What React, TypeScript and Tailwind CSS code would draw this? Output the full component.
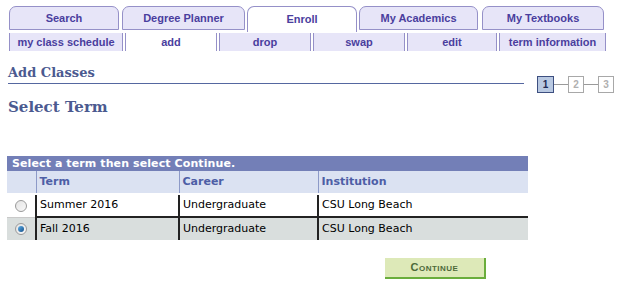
import React from "react";

const tabs = [
  { label: "Search", w: "w-[110px]", mr: "mr-[3px]" },
  { label: "Degree Planner", w: "w-[123px]", mr: "mr-[2px]" },
  { label: "Enroll", w: "w-[110px]", mr: "mr-[2px]", active: true },
  { label: "My Academics", w: "w-[119px]", mr: "mr-[4px]" },
  { label: "My Textbooks", w: "w-[122px]", mr: "" },
];

const subtabs = [
  { label: "my class schedule", w: "w-[114px]" },
  { label: "add", w: "w-[92px]", active: true },
  { label: "drop", w: "w-[92px]" },
  { label: "swap", w: "w-[92px]" },
  { label: "edit", w: "w-[90px]" },
  { label: "term information", w: "w-[107px]" },
];

const rows = [
  { term: "Summer 2016", career: "Undergraduate", inst: "CSU Long Beach", checked: false },
  { term: "Fall 2016", career: "Undergraduate", inst: "CSU Long Beach", checked: true },
];

function Radio({ checked }: { checked: boolean }) {
  return (
    <span className="mx-auto flex h-[12px] w-[12px] items-center justify-center rounded-full border border-[#9a9a9a] bg-gradient-to-br from-[#e4e4e4] to-[#f8f8f8]">
      {checked && <span className="h-[6px] w-[6px] rounded-full bg-gradient-to-br from-[#5fb0e8] to-[#14508a]" />}
    </span>
  );
}

function Step({ n, active }: { n: number; active?: boolean }) {
  return (
    <span
      className={
        active
          ? "flex h-[17px] w-[17px] items-center justify-center border border-[#3d4f80] bg-[#b9c9e2] text-[10px] font-bold leading-none text-[#1e2a55]"
          : "flex h-[17px] w-[16px] items-center justify-center border border-[#a8a8a8] bg-white text-[10px] font-bold leading-none text-[#b0b0b0]"
      }
    >
      {n}
    </span>
  );
}

export default function App() {
  return (
    <div className="h-[283px] w-[620px] overflow-hidden bg-white font-['Liberation_Sans',Arial,sans-serif]">
      {/* top tabs */}
      <div className="flex pl-[9px] pt-[6px]">
        {tabs.map((t) => (
          <div
            key={t.label}
            className={`${t.w} ${t.mr} flex items-center justify-center rounded-t-[7px] border border-[#9590c8] text-[11px] font-bold text-[#4a3e9e] ${
              t.active ? "h-[26px] border-b-0 bg-white" : "h-[24px] bg-[#e7e5f8]"
            }`}
          >
            {t.label}
          </div>
        ))}
      </div>
      {/* sub tabs */}
      <div className="mt-[1px] flex gap-[2px] pl-[9px]">
        {subtabs.map((s) => (
          <div
            key={s.label}
            className={`${s.w} flex h-[18px] items-center justify-center border-x border-[#9590c8] text-[11px] font-bold text-[#4a3e9e] ${
              s.active ? "bg-white" : "bg-[#e7e5f8]"
            }`}
          >
            {s.label}
          </div>
        ))}
      </div>

      {/* page title */}
      <div className="mt-[13px] flex items-start">
        <div className="ml-[8px] w-[516px] border-b border-[#5567a0] pb-[2px] font-['DejaVu_Serif',serif] text-[13px] font-bold leading-[17px] text-[#4b5a90]">
          Add Classes
        </div>
        <div className="ml-[13px] mt-[12px] flex items-center">
          <Step n={1} active />
          <span className="h-px w-[14px] bg-[#9a9a9a]" />
          <Step n={2} />
          <span className="h-px w-[14px] bg-[#9a9a9a]" />
          <Step n={3} />
        </div>
      </div>
      <div className="ml-[8px] mt-[4px] font-['DejaVu_Serif',serif] text-[15px] font-bold leading-[20px] text-[#4b5a90]">
        Select Term
      </div>

      {/* table */}
      <table className="ml-[7px] mt-[39px] w-[521px] border-collapse font-['DejaVu_Sans',Verdana,sans-serif] text-[11px]">
        <thead>
          <tr>
            <th colSpan={4} className="h-[15px] bg-[#737fb7] pl-[5px] text-left text-[11px] font-bold leading-[15px] tracking-[0.1px] text-white">
              Select a term then select Continue.
            </th>
          </tr>
          <tr className="bg-[#dbe2f2] text-left font-bold text-[#4d5ea6]">
            <th className="h-[23px] w-[29px] border-b-2 border-white" />
            <th className="w-[143px] border-b-2 border-l border-white border-l-[#8d9ac8] pl-[3px] font-bold">Term</th>
            <th className="w-[139px] border-b-2 border-l border-white border-l-[#8d9ac8] pl-[3px] font-bold">Career</th>
            <th className="border-b-2 border-l border-white border-l-[#8d9ac8] pl-[3px] font-bold">Institution</th>
          </tr>
        </thead>
        <tbody className="text-black">
          {rows.map((r) => (
            <tr key={r.term} className={r.checked ? "bg-[#d9dedd]" : "bg-white"}>
              <td className="h-[23px] border-t border-[#c9c9c9]">
                <Radio checked={r.checked} />
              </td>
              <td className="border-l-2 border-t-2 border-[#222] pl-[3px]">{r.term}</td>
              <td className="border-l-2 border-t-2 border-[#222] pl-[3px]">{r.career}</td>
              <td className="border-l-2 border-t-2 border-[#222] pl-[3px]">{r.inst}</td>
            </tr>
          ))}
        </tbody>
      </table>

      {/* continue */}
      <div className="ml-[385px] mt-[18px] flex h-[21px] w-[101px] items-center justify-center border-b-2 border-r-2 border-[#6aad3c] bg-[#dde9b8] text-[11px] font-bold tracking-[0.5px] text-[#4d6a3a] [font-variant:small-caps]">
        Continue
      </div>
    </div>
  );
}
